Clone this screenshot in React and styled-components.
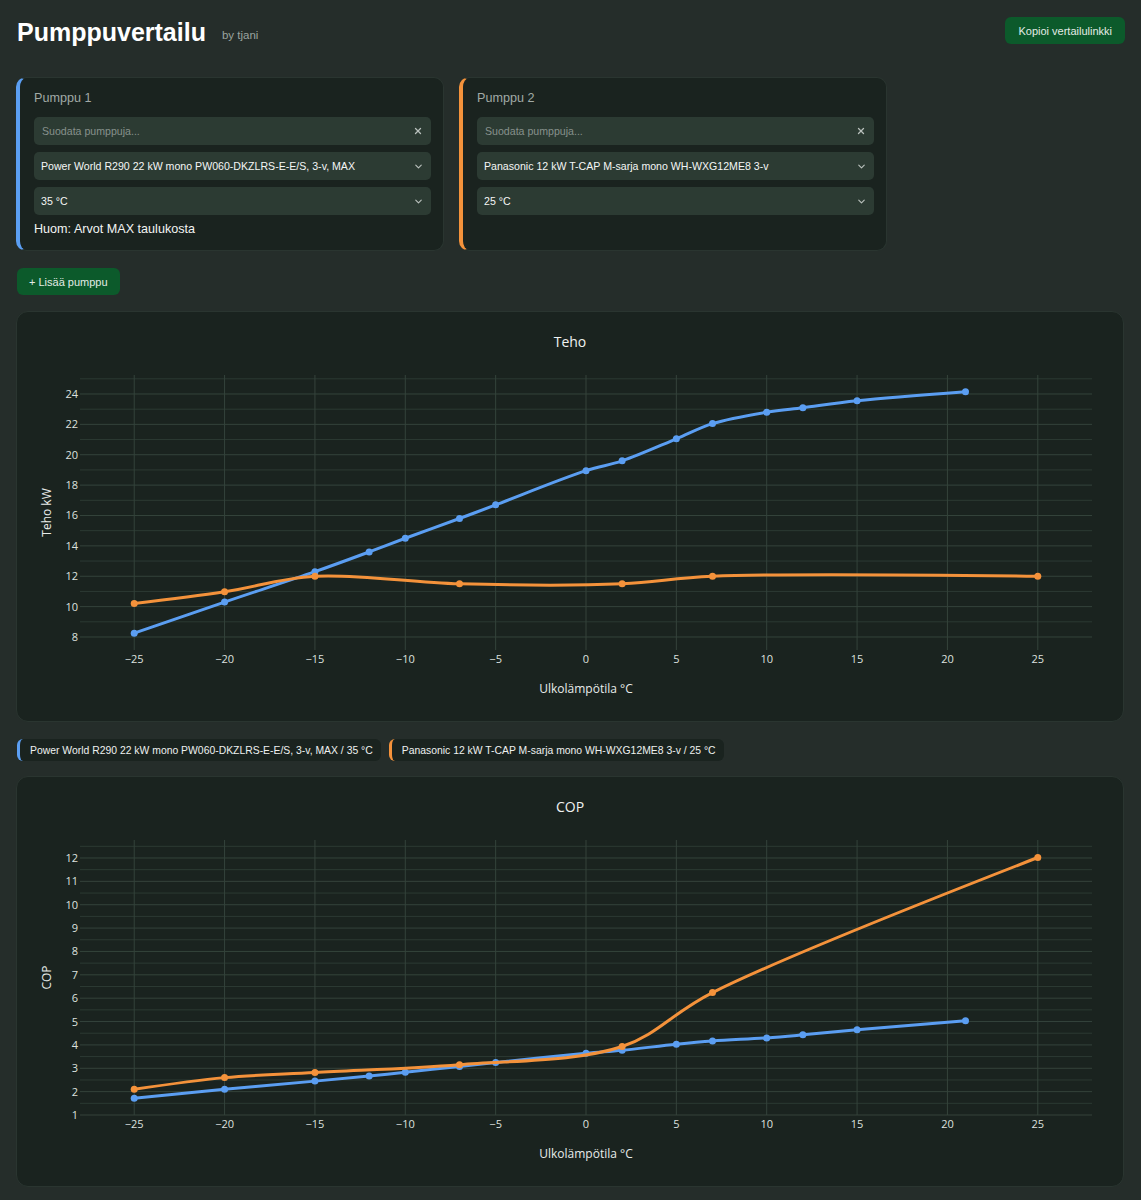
import React, { useState } from "react";
import styled, { createGlobalStyle } from "styled-components";
import { ChevronDown, X } from "lucide-react";

const BLUE = "#5b9ef2";
const ORANGE = "#f4923b";

const GlobalStyle = createGlobalStyle`
    html, body {
        margin: 0;
        background: #252d2a;
    }
    body {
        font-family: "Liberation Sans", Arial, sans-serif;
        color: #e8ecea;
    }
`;

const Page = styled.div`
    padding: 17px 16px 12px 16px;
`;

const Header = styled.header`
    display: flex;
    align-items: center;
    justify-content: space-between;
    height: 27px;
    margin-bottom: 33px;
`;

const TitleRow = styled.div`
    display: flex;
    align-items: baseline;
    gap: 16px;
    padding-left: 1px;
`;

const Title = styled.h1`
    margin: 0;
    font-size: 25px;
    font-weight: 700;
    color: #ffffff;
    position: relative;
    top: 2px;
`;

const Byline = styled.span`
    font-size: 11.5px;
    color: #9aa39f;
`;

const GreenButton = styled.button`
    font-family: "Liberation Sans", Arial, sans-serif;
    font-size: 11px;
    color: #e3ece6;
    background: #0c5a2b;
    border: none;
    border-radius: 6px;
    height: 27px;
    padding: 0 ${(p) => p.$pad || 13}px;
    cursor: pointer;
`;

const PumpRow = styled.div`
    display: flex;
    gap: 15px;
    margin-bottom: 17px;
`;

const PumpCard = styled.div`
    box-sizing: border-box;
    width: 428px;
    min-height: 174px;
    background: #1a231f;
    border: 1px solid #2a3530;
    border-left: 4px solid ${(p) => p.$color};
    border-radius: 10px;
    padding: 13px 12px 13px 14px;
    display: flex;
    flex-direction: column;
    gap: 7px;
`;

const PumpTitle = styled.div`
    font-size: 12.6px;
    color: #a1aaa6;
    line-height: 15px;
    margin-bottom: 4px;
`;

const Field = styled.div`
    position: relative;
    height: 28px;
`;

const FieldInput = styled.input`
    box-sizing: border-box;
    width: 100%;
    height: 28px;
    border: none;
    outline: none;
    border-radius: 5px;
    background: #2c3b33;
    color: #e8ecea;
    font-family: "Liberation Sans", Arial, sans-serif;
    font-size: 10.6px;
    padding: 0 28px 0 8px;

    &::placeholder {
        color: #87918c;
    }
`;

const FieldSelect = styled.select`
    box-sizing: border-box;
    width: 100%;
    height: 28px;
    border: none;
    outline: none;
    border-radius: 5px;
    background: #2c3b33;
    color: #f4f6f5;
    font-family: "Liberation Sans", Arial, sans-serif;
    font-size: 10.6px;
    padding: 0 28px 0 7px;
    appearance: none;
`;

const FieldIcon = styled.span`
    position: absolute;
    right: ${(p) => p.$right || 7}px;
    top: 0;
    height: 28px;
    display: flex;
    align-items: center;
    color: #b9c0bc;
    pointer-events: none;
`;

const Note = styled.div`
    font-size: 12.6px;
    color: #f2f4f3;
    line-height: 16px;
    margin-top: -1px;
`;

const AddRow = styled.div`
    margin-bottom: 16px;
    padding-left: 1px;
`;

const ChartCard = styled.div`
    box-sizing: border-box;
    width: 1108px;
    height: 411px;
    background: #1a231f;
    border: 1px solid #2a3530;
    border-radius: 12px;
    overflow: hidden;
`;

const LegendRow = styled.div`
    display: flex;
    gap: 8px;
    margin: 17px 0 15px 1px;
`;

const LegendChip = styled.div`
    height: 22px;
    display: flex;
    align-items: center;
    background: #1a231f;
    border-left: 3px solid ${(p) => p.$color};
    border-radius: 6px;
    padding: 0 8px 0 10px;
    font-size: 10.4px;
    color: #eef1ef;
    white-space: nowrap;
`;

const ChartSvg = styled.svg`
    display: block;
    font-family: "Open Sans", "Liberation Sans", sans-serif;
`;

// plot geometry inside the chart card (svg coordinates)
const PLOT = { left: 63, right: 1075, top: 63, bottom: 338 };
const X_MIN = -28;
const X_MAX = 28;
const X_TICKS = [-25, -20, -15, -10, -5, 0, 5, 10, 15, 20, 25];

const xPx = (v) => PLOT.left + ((v - X_MIN) / (X_MAX - X_MIN)) * (PLOT.right - PLOT.left);

// plotly-style catmull-rom spline through screen points
function splinePath(pts) {
    if (pts.length < 3) return "M" + pts.map((p) => p.join(",")).join("L");
    const tangents = [];
    for (let i = 1; i < pts.length - 1; i++) {
        const [px, py] = pts[i - 1];
        const [tx, ty] = pts[i];
        const [nx, ny] = pts[i + 1];
        const d1x = px - tx, d1y = py - ty, d2x = nx - tx, d2y = ny - ty;
        const d1a = Math.pow(d1x * d1x + d1y * d1y, 0.25);
        const d2a = Math.pow(d2x * d2x + d2y * d2y, 0.25);
        const numx = d2a * d2a * d1x - d1a * d1a * d2x;
        const numy = d2a * d2a * d1y - d1a * d1a * d2y;
        const den1 = 3 * d2a * (d1a + d2a);
        const den2 = 3 * d1a * (d1a + d2a);
        tangents.push([
            [tx + (den1 && numx / den1), ty + (den1 && numy / den1)],
            [tx - (den2 && numx / den2), ty - (den2 && numy / den2)],
        ]);
    }
    const f = (p) => p[0].toFixed(2) + "," + p[1].toFixed(2);
    let d = "M" + f(pts[0]) + "Q" + f(tangents[0][0]) + " " + f(pts[1]);
    for (let i = 2; i < pts.length - 1; i++) {
        d += "C" + f(tangents[i - 2][1]) + " " + f(tangents[i - 1][0]) + " " + f(pts[i]);
    }
    d += "Q" + f(tangents[pts.length - 3][1]) + " " + f(pts[pts.length - 1]);
    return d;
}

const fmtTick = (v) => (v < 0 ? "\u2212" + Math.abs(v) : String(v));

function LineChart({ title, yTitle, yMin, yMax, major, minor, series }) {
    const yPx = (v) => PLOT.bottom - ((v - yMin) / (yMax - yMin)) * (PLOT.bottom - PLOT.top);
    const lines = [];
    for (let v = Math.ceil(yMin / minor) * minor; v <= yMax + 1e-9; v += minor) {
        lines.push(Math.round(v * 100) / 100);
    }
    const isMajor = (v) => Math.abs(v / major - Math.round(v / major)) < 1e-6;
    const plotMidX = (PLOT.left + PLOT.right) / 2;

    return (
        <ChartSvg width="1106" height="409" viewBox="0 0 1106 409">
            <text x="553" y="35" textAnchor="middle" fontSize="14" fill="#f0f2f1">{title}</text>

            {lines.map((v) => (
                <line key={"h" + v} x1={PLOT.left} x2={PLOT.right} y1={yPx(v)} y2={yPx(v)}
                    stroke={isMajor(v) ? "#34433b" : "#2c3a33"} strokeWidth="1" />
            ))}
            {X_TICKS.map((v) => (
                <line key={"v" + v} x1={xPx(v)} x2={xPx(v)} y1={PLOT.top} y2={PLOT.bottom}
                    stroke="#34433b" strokeWidth="1" />
            ))}

            {lines.filter(isMajor).map((v) => (
                <text key={"yt" + v} x={PLOT.left - 2} y={yPx(v) + 4} textAnchor="end" fontSize="11" fill="#dde1df">{v}</text>
            ))}
            {X_TICKS.map((v) => (
                <text key={"xt" + v} x={xPx(v)} y={PLOT.bottom + 13} textAnchor="middle" fontSize="11" fill="#dde1df">{fmtTick(v)}</text>
            ))}

            <text x={plotMidX} y="381" textAnchor="middle" fontSize="12" fill="#e8ecea">Ulkolämpötila °C</text>
            <text x="0" y="0" transform={`translate(34 ${(PLOT.top + PLOT.bottom) / 2}) rotate(-90)`}
                textAnchor="middle" fontSize="12" fill="#e8ecea">{yTitle}</text>

            {series.map((s) => {
                const pts = s.data.map(([x, y]) => [xPx(x), yPx(y)]);
                return (
                    <g key={s.name}>
                        <path d={splinePath(pts)} fill="none" stroke={s.color} strokeWidth="3" strokeLinejoin="round" />
                        {pts.map(([x, y], i) => (
                            <circle key={i} cx={x} cy={y} r="3.5" fill={s.color} />
                        ))}
                    </g>
                );
            })}
        </ChartSvg>
    );
}

const pumps = [
    {
        id: 1,
        color: BLUE,
        model: "Power World R290 22 kW mono PW060-DKZLRS-E-E/S, 3-v, MAX",
        temp: "35 °C",
        note: "Huom: Arvot MAX taulukosta",
        teho: [[-25, 8.25], [-20, 10.3], [-15, 12.3], [-12, 13.6], [-10, 14.5], [-7, 15.8], [-5, 16.7], [0, 18.95], [2, 19.6], [5, 21.05], [7, 22.05], [10, 22.8], [12, 23.1], [15, 23.55], [21, 24.15]],
        cop: [[-25, 1.72], [-20, 2.1], [-15, 2.45], [-12, 2.67], [-10, 2.83], [-7, 3.08], [-5, 3.25], [0, 3.64], [2, 3.77], [5, 4.03], [7, 4.17], [10, 4.3], [12, 4.43], [15, 4.65], [21, 5.03]],
    },
    {
        id: 2,
        color: ORANGE,
        model: "Panasonic 12 kW T-CAP M-sarja mono WH-WXG12ME8 3-v",
        temp: "25 °C",
        note: null,
        teho: [[-25, 10.2], [-20, 10.98], [-15, 12], [-7, 11.5], [2, 11.5], [7, 12], [25, 12]],
        cop: [[-25, 2.1], [-20, 2.6], [-15, 2.82], [-7, 3.15], [2, 3.93], [7, 6.24], [25, 12.02]],
    },
];

function PumpPanel({ pump }) {
    const [filter, setFilter] = useState("");
    return (
        <PumpCard $color={pump.color}>
            <PumpTitle>Pumppu {pump.id}</PumpTitle>
            <Field>
                <FieldInput placeholder="Suodata pumppuja..." value={filter} onChange={(e) => setFilter(e.target.value)} />
                <FieldIcon $right={8}><X size={10} strokeWidth={3} /></FieldIcon>
            </Field>
            <Field>
                <FieldSelect defaultValue={pump.model}>
                    <option>{pump.model}</option>
                </FieldSelect>
                <FieldIcon><ChevronDown size={11} strokeWidth={2.5} /></FieldIcon>
            </Field>
            <Field>
                <FieldSelect defaultValue={pump.temp}>
                    <option>{pump.temp}</option>
                </FieldSelect>
                <FieldIcon><ChevronDown size={11} strokeWidth={2.5} /></FieldIcon>
            </Field>
            {pump.note && <Note>{pump.note}</Note>}
        </PumpCard>
    );
}

export default function App() {
    const seriesOf = (key) => pumps.map((p) => ({ name: p.model, color: p.color, data: p[key] }));

    return (
        <Page>
            <GlobalStyle />
            <Header>
                <TitleRow>
                    <Title>Pumppuvertailu</Title>
                    <Byline>by tjani</Byline>
                </TitleRow>
                <GreenButton>Kopioi vertailulinkki</GreenButton>
            </Header>

            <PumpRow>
                {pumps.map((p) => <PumpPanel key={p.id} pump={p} />)}
            </PumpRow>

            <AddRow>
                <GreenButton $pad={12}>+ Lisää pumppu</GreenButton>
            </AddRow>

            <ChartCard>
                <LineChart title="Teho" yTitle="Teho kW" yMin={7.144} yMax={25.25} major={2} minor={1} series={seriesOf("teho")} />
            </ChartCard>

            <LegendRow>
                {pumps.map((p) => (
                    <LegendChip key={p.id} $color={p.color}>{p.model} / {p.temp}</LegendChip>
                ))}
            </LegendRow>

            <ChartCard>
                <LineChart title="COP" yTitle="COP" yMin={1} yMax={12.77} major={1} minor={0.5} series={seriesOf("cop")} />
            </ChartCard>
        </Page>
    );
}
